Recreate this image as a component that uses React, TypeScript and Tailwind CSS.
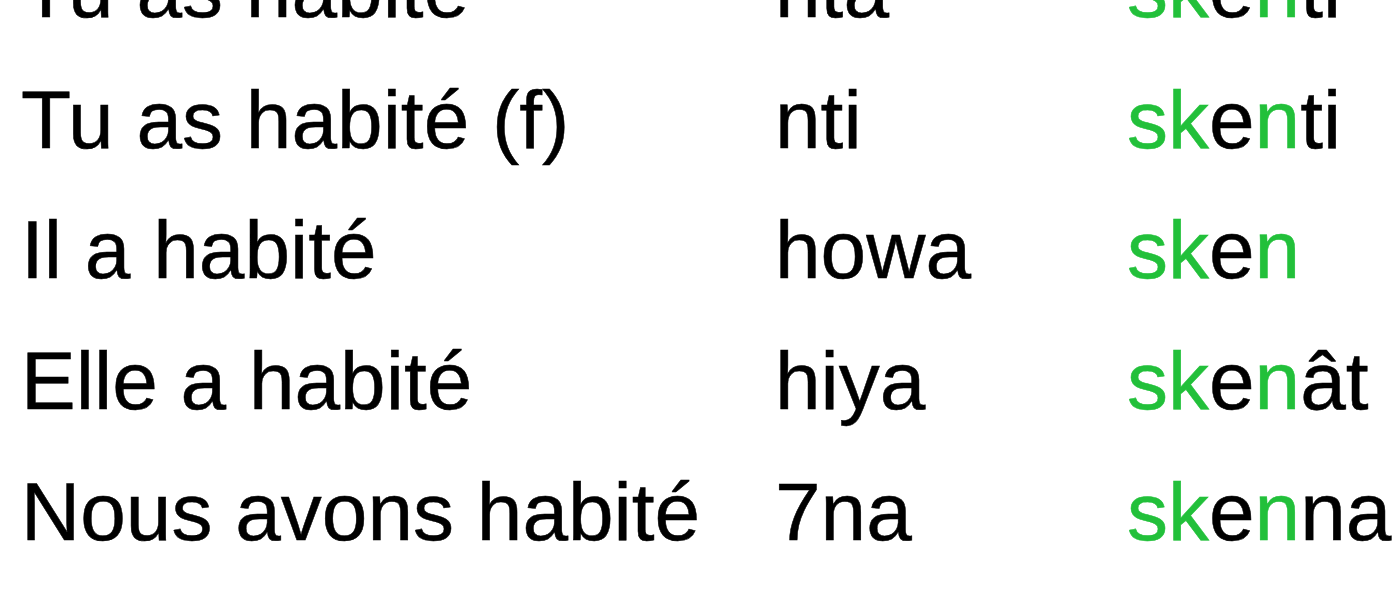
import React from "react";

const rows: [string, string, string][] = [
  ["Tu as habité", "nta", "ti"],
  ["Tu as habité (f)", "nti", "ti"],
  ["Il a habité", "howa", ""],
  ["Elle a habité", "hiya", "ât"],
  ["Nous avons habité", "7na", "na"],
];

export default function App() {
  return (
    <div className="w-[1400px] h-[600px] overflow-hidden bg-white">
      <div
        className="mt-[-76px] pl-[21px] grid grid-cols-[754px_352px_1fr] text-[82px] leading-[130.67px] text-black whitespace-nowrap [-webkit-text-stroke:0.5px_currentColor]"
        style={{ fontFamily: '"Liberation Sans", Arial, sans-serif' }}
      >
        {rows.map(([fr, pron, rest], i) => (
          <React.Fragment key={i}>
            <div>{fr}</div>
            <div>{pron}</div>
            <div>
              <span className="text-[#22c03a]">sk</span>
              <span>e</span>
              <span className="text-[#22c03a]">n</span>
              <span>{rest}</span>
            </div>
          </React.Fragment>
        ))}
      </div>
    </div>
  );
}
